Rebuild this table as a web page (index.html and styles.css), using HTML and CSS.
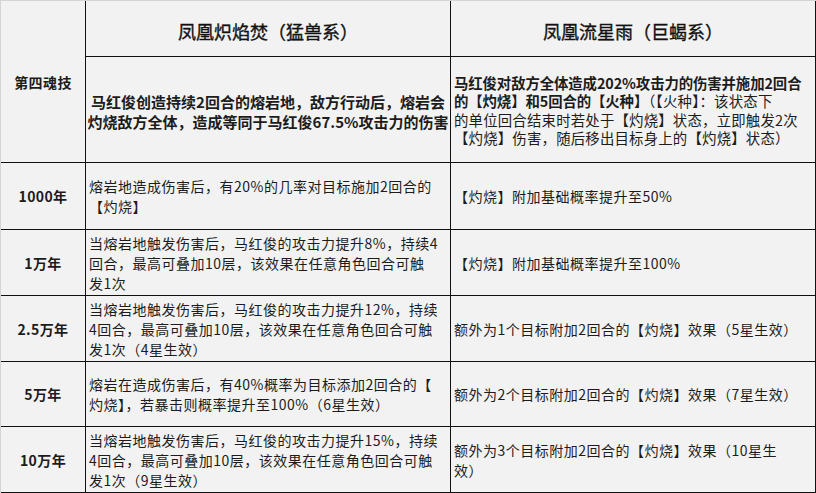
FILE: index.html
```html
<!DOCTYPE html>
<html lang="zh-CN">
<head>
<meta charset="utf-8">
<title>马红俊 第四魂技</title>
<link rel="stylesheet" href="styles.css">
</head>
<body>
<div class="table">
  <div class="cell label span2">第四魂技</div>
  <div class="cell head">凤凰炽焰焚（猛兽系）</div>
  <div class="cell head">凤凰流星雨（巨蝎系）</div>

  <div class="cell desc center"><p class="txt strong">马红俊创造持续2回合的熔岩地，敌方行动后，熔岩会<br>灼烧敌方全体，造成等同于马红俊67.5%攻击力的伤害</p></div>
  <div class="cell desc"><p class="txt mixed"><b>马红俊对敌方全体造成202%攻击力的伤害并施加2回合<br>的【灼烧】和5回合的【火种】</b>（【火种】：该状态下<br>的单位回合结束时若处于【灼烧】状态，立即触发2次<br>【灼烧】伤害，随后移出目标身上的【灼烧】状态）</p></div>

  <div class="cell label">1000年</div>
  <div class="cell body"><p class="txt">熔岩地造成伤害后，有20%的几率对目标施加2回合的<br>【灼烧】</p></div>
  <div class="cell body"><p class="txt">【灼烧】附加基础概率提升至50%</p></div>

  <div class="cell label">1万年</div>
  <div class="cell body"><p class="txt">当熔岩地触发伤害后，马红俊的攻击力提升8%，持续4<br>回合，最高可叠加10层，该效果在任意角色回合可触<br>发1次</p></div>
  <div class="cell body"><p class="txt">【灼烧】附加基础概率提升至100%</p></div>

  <div class="cell label">2.5万年</div>
  <div class="cell body"><p class="txt">当熔岩地触发伤害后，马红俊的攻击力提升12%，持续<br>4回合，最高可叠加10层，该效果在任意角色回合可触<br>发1次（4星生效）</p></div>
  <div class="cell body"><p class="txt">额外为1个目标附加2回合的【灼烧】效果（5星生效）</p></div>

  <div class="cell label">5万年</div>
  <div class="cell body"><p class="txt">熔岩在造成伤害后，有40%概率为目标添加2回合的【<br>灼烧】，若暴击则概率提升至100%（6星生效）</p></div>
  <div class="cell body"><p class="txt">额外为2个目标附加2回合的【灼烧】效果（7星生效）</p></div>

  <div class="cell label">10万年</div>
  <div class="cell body"><p class="txt">当熔岩地触发伤害后，马红俊的攻击力提升15%，持续<br>4回合，最高可叠加10层，该效果在任意角色回合可触<br>发1次（9星生效）</p></div>
  <div class="cell body"><p class="txt">额外为3个目标附加2回合的【灼烧】效果（10星生<br>效）</p></div>
</div>
</body>
</html>
```
FILE: styles.css
```css
html, body {
  margin: 0;
  padding: 0;
  background: #f2f2f2;
}

body {
  font-family: "Noto Sans CJK SC", "Microsoft YaHei", "Noto Sans", sans-serif;
  color: #1c1c1c;
}

.table {
  display: grid;
  grid-template-columns: 85px 365px 365px;
  grid-template-rows: 56px 106px 67px 66px 66px 65px 66px;
  width: 816px;
  box-sizing: border-box;
  border-top: 1px solid #d4d4d4;
  border-left: 1px solid #d4d4d4;
  background: #f2f2f2;
}

.cell {
  box-sizing: border-box;
  border-right: 1px solid #111;
  border-bottom: 1px solid #111;
  display: flex;
  align-items: center;
  padding: 0 3px;
  min-width: 0;
}

.span2 {
  grid-row: span 2;
}

.label {
  justify-content: center;
  font-weight: bold;
  font-size: 14px;
  letter-spacing: 0.4px;
  padding: 0;
}

.head {
  justify-content: center;
  font-size: 18px;
  color: #111;
  -webkit-text-stroke: 0.35px #111;
  padding-top: 5px;
}

.txt {
  margin: 0;
}

.body .txt {
  font-size: 14px;
  letter-spacing: 0.5px;
  line-height: 20px;
  white-space: nowrap;
}

.desc.center {
  justify-content: center;
  padding-top: 4px;
}

.strong {
  font-weight: bold;
  font-size: 15px;
  line-height: 20px;
  text-align: center;
  white-space: nowrap;
  letter-spacing: 0;
}

.mixed {
  font-size: 14.4px;
  line-height: 18.5px;
  white-space: nowrap;
  letter-spacing: 0.2px;
  padding-top: 2px;
}

.mixed b {
  font-size: 14.4px;
  line-height: 18.5px;
  letter-spacing: -0.1px;
}
```
